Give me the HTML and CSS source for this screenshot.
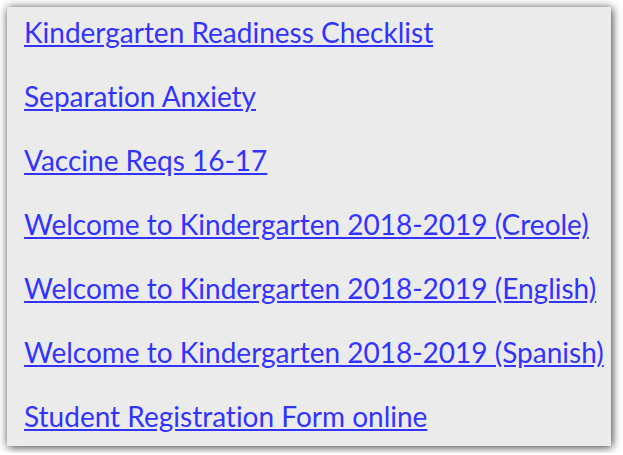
FILE: index.html
```html
<!DOCTYPE html>
<html>
<head>
<meta charset="utf-8">
<link rel="stylesheet" href="styles.css">
</head>
<body>
<div class="box">
  <ul class="links">
    <li><a href="#">Kindergarten Readiness Checklist</a></li>
    <li><a href="#">Separation Anxiety</a></li>
    <li><a href="#">Vaccine Reqs 16-17</a></li>
    <li><a href="#">Welcome to Kindergarten 2018-2019 (Creole)</a></li>
    <li><a href="#">Welcome to Kindergarten 2018-2019 (English)</a></li>
    <li><a href="#">Welcome to Kindergarten 2018-2019 (Spanish)</a></li>
    <li><a href="#">Student Registration Form online</a></li>
  </ul>
</div>
</body>
</html>
```
FILE: styles.css
```css
html, body {
  margin: 0;
  padding: 0;
  background: #ffffff;
}
body {
  padding: 7px;
  font-family: Lato, "Liberation Sans", sans-serif;
}
.box {
  width: 604px;
  height: 439px;
  box-sizing: border-box;
  background: #ebebeb;
  box-shadow: 1px 1px 9px rgba(0, 0, 0, 0.8);
  padding: 5px 0 0 17px;
}
.links {
  list-style: none;
  margin: 0;
  padding: 0;
  display: flex;
  flex-direction: column;
  gap: 24px;
}
.links li {
  line-height: 40px;
  font-size: 28px;
  white-space: nowrap;
  font-variant-ligatures: none;
}
.links a {
  color: #3333ff;
  text-decoration: underline;
}
```
